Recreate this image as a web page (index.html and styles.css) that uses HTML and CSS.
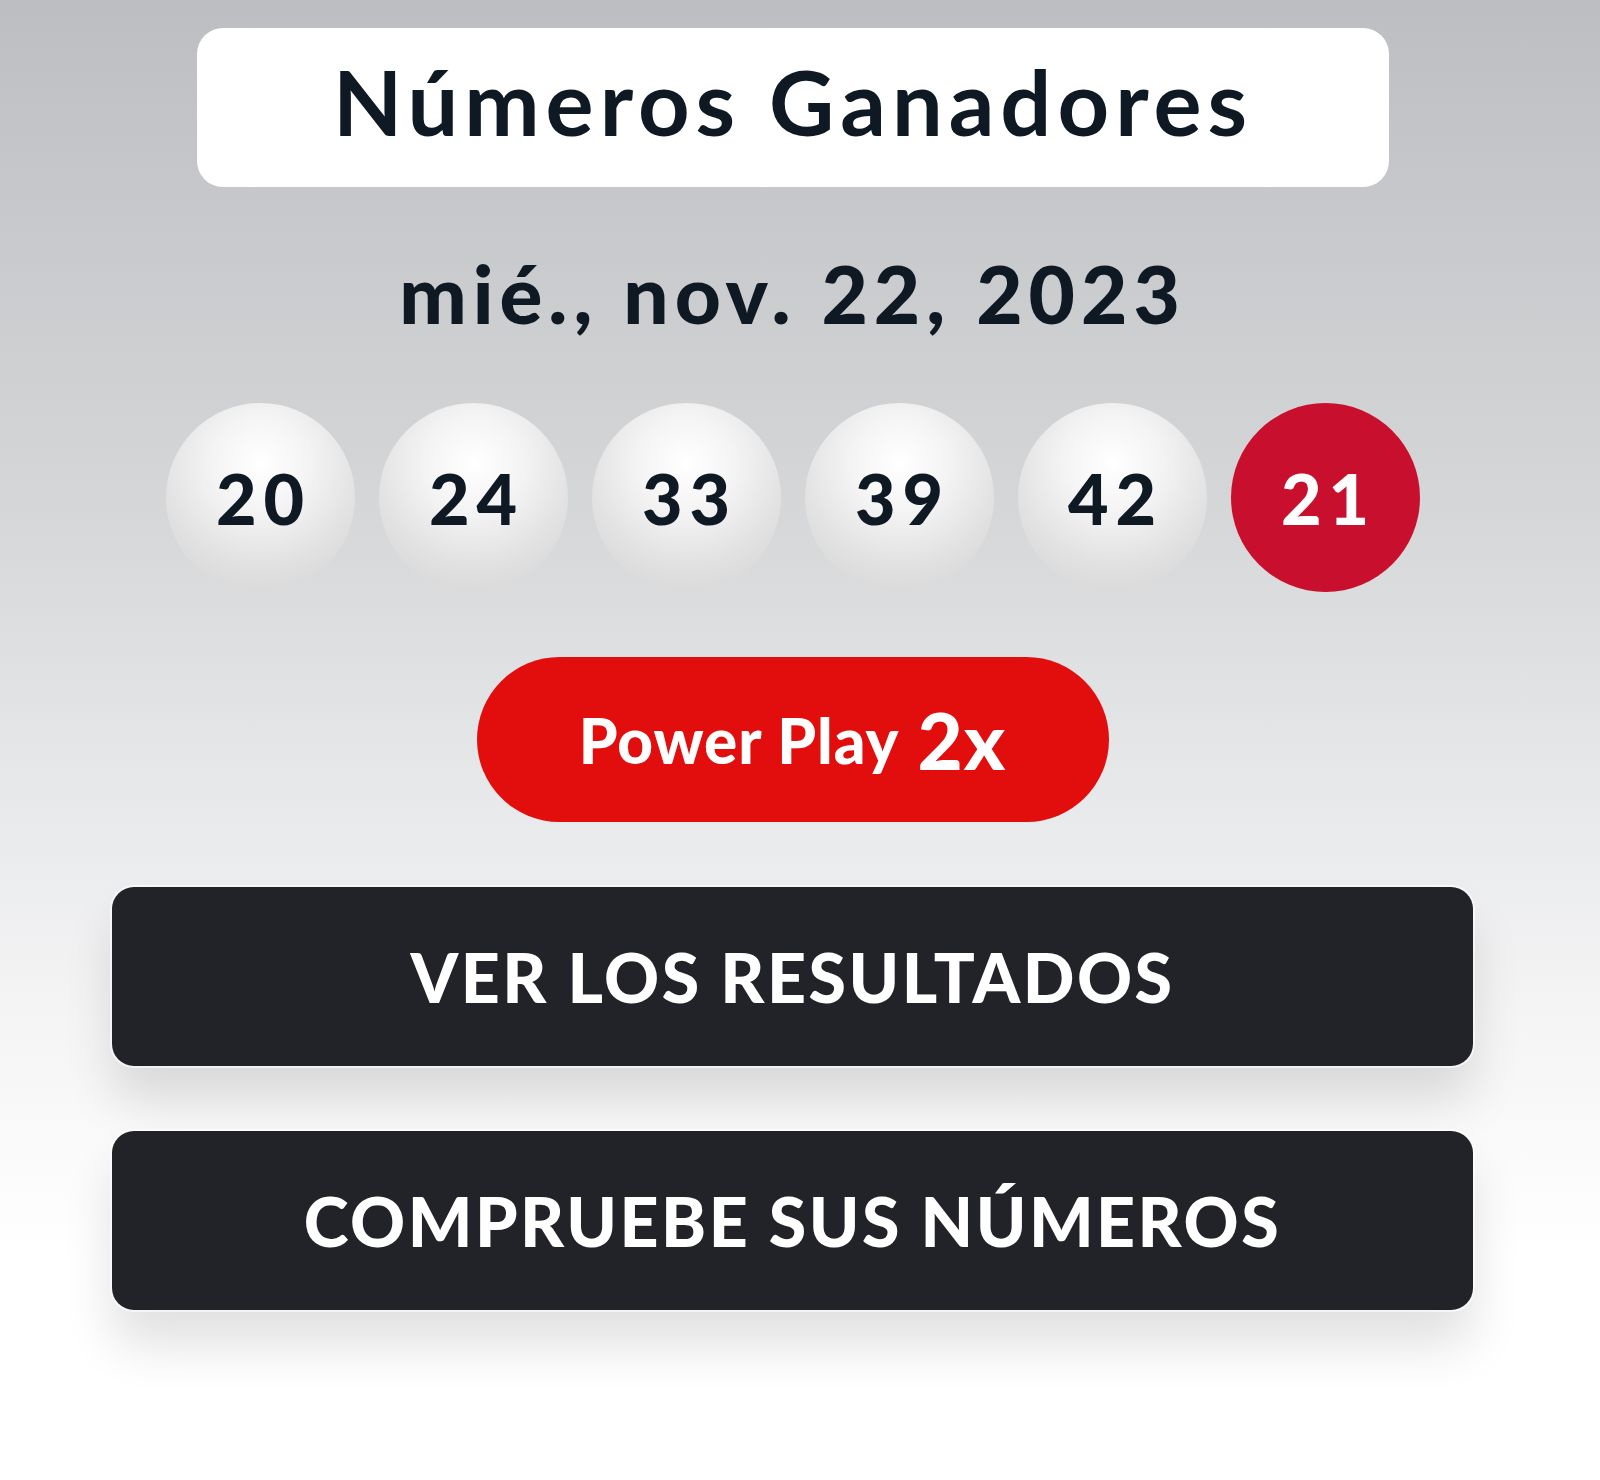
FILE: index.html
```html
<!DOCTYPE html>
<html lang="es">
<head>
    <meta charset="UTF-8">
    <meta name="viewport" content="width=device-width, initial-scale=1.0">
    <title>Números Ganadores</title>
    <link rel="stylesheet" href="styles.css">
</head>
<body>

<div class="results">
    <h2 class="results-title">Números Ganadores</h2>
    <div class="draw-date">mié., nov. 22, 2023</div>

    <div class="balls">
        <span class="ball">20</span>
        <span class="ball">24</span>
        <span class="ball">33</span>
        <span class="ball">39</span>
        <span class="ball">42</span>
        <span class="ball powerball">21</span>
    </div>

    <div class="power-play">Power Play <span class="multiplier">2x</span></div>

    <a class="action-btn" href="#">VER LOS RESULTADOS</a>
    <a class="action-btn" href="#">COMPRUEBE SUS NÚMEROS</a>
</div>

</body>
</html>
```

FILE: styles.css
```css
html, body {
    height: 100%;
}
body {
    margin: 0;
    font-family: 'Lato', 'Open Sans', sans-serif;
    color: #0f1923;
    background: linear-gradient(to bottom, #bdbec1 0%, #d6d7d9 35%, #e6e7e9 52%, #f4f4f5 68%, #ffffff 85%);
}
.results {
    width: 1361px;
    margin: 0 auto;
    padding: 28px 15px 0 0;
    display: flex;
    flex-direction: column;
    align-items: center;
}
.results-title {
    align-self: stretch;
    box-sizing: border-box;
    margin: 0 84px 0 85px;
    height: 159px;
    padding-bottom: 12px;
    line-height: 147px;
    background: #fff;
    border-radius: 26px;
    text-align: center;
    font-size: 90px;
    font-weight: 700;
    letter-spacing: 6px;
}
.draw-date {
    margin-top: 56px;
    font-size: 80px;
    font-weight: 900;
    line-height: 100px;
    letter-spacing: 6px;
}
.balls {
    display: flex;
    gap: 24px;
    margin-top: 60px;
}
.ball {
    box-sizing: border-box;
    width: 189px;
    height: 189px;
    padding-left: 7px;
    border-radius: 50%;
    display: flex;
    align-items: center;
    justify-content: center;
    font-size: 70px;
    font-weight: 900;
    letter-spacing: 7px;
    background: radial-gradient(circle at 50% 32%, #ffffff 0%, #f4f4f4 30%, #e2e2e2 62%, #d2d2d2 100%);
}
.ball.powerball {
    background: #c8102e;
    color: #fff;
}
.power-play {
    margin-top: 65px;
    width: 632px;
    height: 165px;
    border-radius: 83px;
    background: #e20e0e;
    color: #fff;
    display: flex;
    align-items: center;
    justify-content: center;
    font-size: 62px;
    font-weight: 900;
    letter-spacing: 1px;
}
.multiplier {
    font-size: 78px;
    margin-left: 18px;
}
.action-btn {
    align-self: stretch;
    margin-top: 65px;
    height: 179px;
    border-radius: 22px;
    background: #212328;
    color: #fff;
    text-decoration: none;
    display: flex;
    align-items: center;
    justify-content: center;
    font-size: 68px;
    font-weight: 900;
    letter-spacing: 2.5px;
    box-shadow: 0 0 0 2px rgba(255, 255, 255, 0.6), 0 35px 50px rgba(0, 0, 0, 0.12);
}
.action-btn + .action-btn {
    margin-top: 65px;
}
```
